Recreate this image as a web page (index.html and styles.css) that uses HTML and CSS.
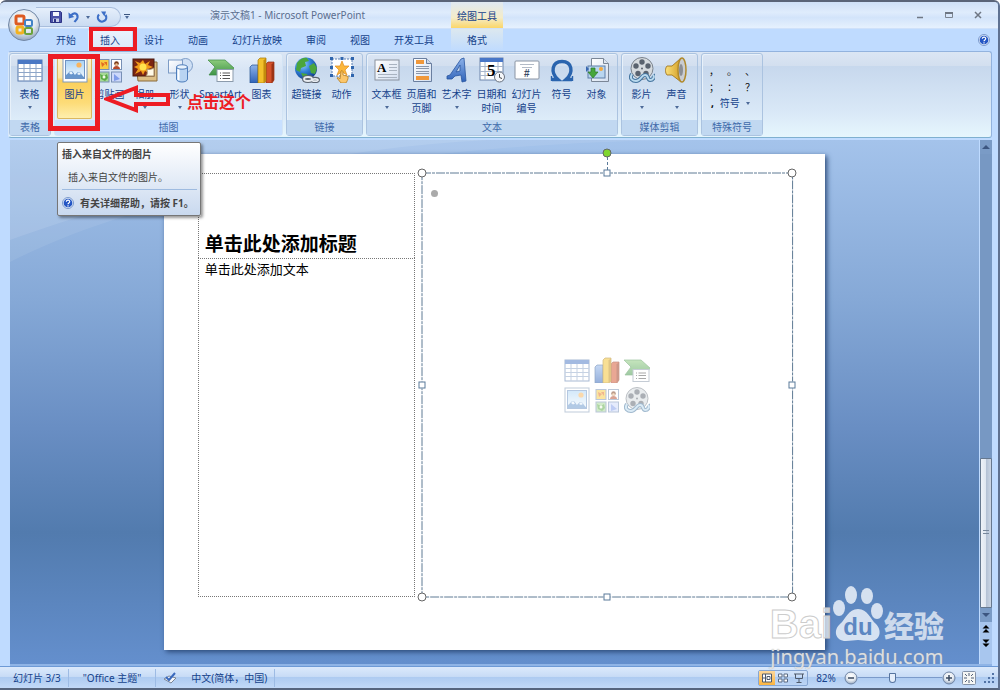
FILE: index.html
```html
<!DOCTYPE html>
<html lang="zh-CN">
  <head>
    <meta charset="UTF-8" />
    <meta name="viewport" content="width=device-width, initial-scale=1.0" />
    <title>演示文稿1 - Microsoft PowerPoint</title>
    <link rel="stylesheet" href="styles.css">
  </head>
  <body>
    <!-- icon library -->
    <svg class="sprite" aria-hidden="true">
      <defs>
        <linearGradient id="g-blue" x1="0" y1="0" x2="0" y2="1">
          <stop offset="0" stop-color="#8db2ea" /><stop offset="1" stop-color="#2e62b8" />
        </linearGradient>
        <linearGradient id="g-green" x1="0" y1="0" x2="0" y2="1">
          <stop offset="0" stop-color="#8ccb7c" /><stop offset="1" stop-color="#3f9548" />
        </linearGradient>
        <linearGradient id="g-sky" x1="0" y1="0" x2="0" y2="1">
          <stop offset="0" stop-color="#a9d3f5" /><stop offset="1" stop-color="#f3f9fe" />
        </linearGradient>
        <linearGradient id="g-page" x1="0" y1="0" x2="1" y2="1">
          <stop offset="0" stop-color="#ffffff" /><stop offset="1" stop-color="#d3dff0" />
        </linearGradient>
        <linearGradient id="g-gold" x1="0" y1="0" x2="1" y2="0">
          <stop offset="0" stop-color="#fbe17c" /><stop offset="1" stop-color="#c98d10" />
        </linearGradient>
        <radialGradient id="g-orb" cx="50%" cy="35%" r="65%">
          <stop offset="0" stop-color="#ffffff" /><stop offset="0.6" stop-color="#e2e8ef" /><stop offset="1" stop-color="#93a5bd" />
        </radialGradient>
        <radialGradient id="g-globe" cx="35%" cy="30%" r="75%">
          <stop offset="0" stop-color="#9cd4ff" /><stop offset="0.5" stop-color="#2f7fd6" /><stop offset="1" stop-color="#123e8c" />
        </radialGradient>
      </defs>
      <symbol id="i-table" viewBox="0 0 26 26">
        <rect x="1" y="3" width="24" height="21" fill="#fff" stroke="#5577ab" />
        <rect x="1" y="3" width="24" height="4" fill="#4a78c4" />
        <path d="M1 11.5h24M1 15.5h24M1 19.5h24M7 7v17M13 7v17M19 7v17" stroke="#8ea6c8" fill="none" />
      </symbol>
      <symbol id="i-picture" viewBox="0 0 26 26">
        <rect x="1" y="1" width="24" height="24" fill="#fff" stroke="#8199b8" />
        <rect x="3.5" y="3.5" width="19" height="18" fill="url(#g-sky)" stroke="#6e93c4" />
        <circle cx="17" cy="8" r="2.6" fill="#f9b45c" />
        <path d="M4 21v-3c2-1 3-4 5-4s3 3 4 4c1-1 2-3 4-3s3 4 5 5v1z" fill="#6796cd" />
        <path d="M7 16l2-2 2 2.500-2 1zM15 17l2-2 2 2-2 1z" fill="#eaf4fc" />
      </symbol>
      <symbol id="i-clip" viewBox="0 0 26 26">
        <g stroke="#7890b5" fill="#fff">
          <rect x="2" y="2.500" width="10" height="10" fill="#f9cb40" /><rect x="14.500" y="2.500" width="10" height="10" />
          <rect x="2" y="15" width="10" height="10" fill="#a6d996" /><rect x="14.500" y="15" width="10" height="10" fill="#ccd8fa" />
        </g>
        <path d="M4 5l4 2-3 3zM7 5h3v4z" fill="#e36b22" />
        <circle cx="19.500" cy="6.500" r="2.300" fill="#7a3a18" /><path d="M16 12c0-4 7-4 7 0z" fill="#b54a2c" /><circle cx="19.500" cy="7.500" r="1.300" fill="#f2c08b" />
        <path d="M3 17l4 2 3-2 1 4-3 3-4-2z" fill="#5baa47" /><circle cx="7" cy="20" r="1.500" fill="#f0fbe8" />
        <path d="M17 17l6 5-6 2z" fill="#7f9bea" />
      </symbol>
      <symbol id="i-album" viewBox="0 0 26 26">
        <path d="M4 5h21v19H6z" fill="#dcbf85" stroke="#8a6b3a" />
        <rect x="1" y="2" width="21" height="17" fill="#7b2513" stroke="#4b1a10" />
        <path d="M11 3l2 4 5-3-2 4 5 2-5 2 3 5-6-3-2 4-2-4-6 3 3-5-4-2 4-2-3-4 5 2z" fill="#f29b1a" />
        <circle cx="11" cy="10" r="3.500" fill="#ffe34d" />
        <path d="M14 19c2-2 1-5 1-7 2 1 5 0 7-1v8z" fill="#fff9e6" stroke="#a58c63" />
      </symbol>
      <symbol id="i-shapes" viewBox="0 0 26 26">
        <circle cx="18.500" cy="8.500" r="7" fill="#cfe0f5" stroke="#7d9cc6" />
        <rect x="1.500" y="3" width="14" height="13" fill="url(#g-page)" stroke="#7d9cc6" />
        <path d="M9.500 10v12c0 4 11 4 11 0V10z" fill="#b9d4f2" stroke="#4e7dbb" />
        <path d="M11.500 12v11" stroke="#fff" stroke-width="2" />
        <ellipse cx="15" cy="10" rx="5.500" ry="2.200" fill="#e9f3fd" stroke="#4e7dbb" />
      </symbol>
      <symbol id="i-smartart" viewBox="0 0 26 26">
        <path d="M0 3h17l9 8-4 7H1l6-8z" fill="url(#g-green)" stroke="#3d8a42" stroke-width=".7" />
        <rect x="9" y="12.500" width="16" height="12" fill="#fff" stroke="#8c9bac" />
        <path d="M12 16h1M12 18.500h1M12 21.500h1M14.500 16H22M14.500 18.500H22M14.500 21.500H22" stroke="#555" fill="none" />
      </symbol>
      <symbol id="i-chart" viewBox="0 0 26 26">
        <path d="M1 10l2-2h6v18H1z" fill="url(#g-blue)" stroke="#23508f" stroke-width=".7" />
        <path d="M17 7l2-2h6v18l-2 3h-6z" fill="#d5522b" stroke="#8f2d12" stroke-width=".7" />
        <path d="M22.500 7.500L25 5v18l-2.500 3z" fill="#9c3315" />
        <path d="M9 3l2-2h6v23l-2 2H9z" fill="#f3c02b" stroke="#a57607" stroke-width=".7" />
        <path d="M14.500 3.500L17 1v23l-2.500 2z" fill="#c38c0d" />
      </symbol>
      <symbol id="i-link" viewBox="0 0 26 26">
        <circle cx="12" cy="11.500" r="11" fill="url(#g-globe)" />
        <path d="M3 6c3-5 8-6 10-5l2 3-4 1 1 4-5 2-1 4-4-2zM15 9l5-3 3 5-2 6-4-1zM7 16l6 1 1 4-4 1z" fill="#4ba63c" />
        <g fill="none" stroke="#5b6470" stroke-width="4"><ellipse cx="14" cy="22" rx="4" ry="2" /><ellipse cx="21" cy="23" rx="3" ry="1.200" /></g>
        <g fill="none" stroke="#e7ebf0" stroke-width="1.800"><ellipse cx="14" cy="22" rx="4" ry="2" /><ellipse cx="21" cy="23" rx="3" ry="1.200" /></g>
      </symbol>
      <symbol id="i-action" viewBox="0 0 26 26">
        <rect x="3" y="2" width="20" height="17" fill="#fff" stroke="#5a7fb3" stroke-dasharray="2 1" />
        <path d="M13 4l2 5h5l-4 4 2 5-5-3-5 3 2-5-4-4h5z" fill="#fcb73c" stroke="#e08b1c" stroke-width=".7" />
        <g fill="#2f65ad"><rect x="1" y="0" width="3" height="3" /><rect x="11.500" y="0" width="3" height="3" /><rect x="22" y="0" width="3" height="3" /><rect x="1" y="9" width="3" height="3" /><rect x="22" y="9" width="3" height="3" /><rect x="1" y="17" width="3" height="3" /><rect x="22" y="17" width="3" height="3" /></g>
        <path d="M12 14c1-1 2 0 2 1v3l4 1c2 0 1 4-1 7h-5l-4-5c1-1 2 0 3 1z" fill="#fbc66b" stroke="#b57c1c" stroke-width=".8" />
      </symbol>
      <symbol id="i-header" viewBox="0 0 26 26">
        <path d="M4.500 1.500h13l5 5v18h-18z" fill="url(#g-page)" stroke="#6a7fa0" />
        <path d="M17.500 1.500v5h5" fill="#cdd9ea" stroke="#6a7fa0" />
        <rect x="7" y="3" width="8" height="4" fill="#f0983a" /><rect x="7" y="19" width="13" height="4" fill="#f0983a" />
        <path d="M7 9.500h13M7 11.500h13M7 14.500h13M7 16.500h13" stroke="#8b97aa" fill="none" />
      </symbol>
      <symbol id="i-wordart" viewBox="0 0 26 26">
        <path fill-rule="evenodd" d="M3 19l3-1L17 2l3-1 2 23-4 1-1-7-6 1-3 3-5 0zM12 15l4-1V8z" fill="url(#g-blue)" stroke="#2855a0" stroke-width=".8" />
      </symbol>
      <symbol id="i-omega" viewBox="0 0 26 26">
        <path d="M3 22.500h6c-8-7-6-18 4-18s12 11 4 18h6" fill="none" stroke="#2a64ae" stroke-width="3.400" />
        <path d="M2.500 24v-5M23.500 24v-5" stroke="#2a64ae" stroke-width="1.400" />
      </symbol>
      <symbol id="i-object" viewBox="0 0 26 26">
        <path d="M7.500 1.500h12l5 5v18h-17z" fill="url(#g-page)" stroke="#7a8696" />
        <path d="M19.500 1.500v5h5" fill="#dde5f0" stroke="#7a8696" />
        <rect x="4" y="9" width="17" height="12" fill="#b9d6f0" stroke="#5f7fa8" />
        <circle cx="17" cy="12" r="2" fill="#f5a93c" /><path d="M2 9v6l3-3z" fill="#3a68b0" />
        <path d="M7 11h4v4h3l-5 6-5-6h3z" fill="#46a63c" stroke="#2d7a28" stroke-width=".7" />
      </symbol>
      <symbol id="i-movie" viewBox="0 0 26 26">
        <circle cx="13" cy="11.500" r="11" fill="#d5dade" stroke="#7a828c" />
        <g fill="#59626e"><circle cx="13" cy="5" r="2.700" /><circle cx="19" cy="9" r="2.700" /><circle cx="17" cy="16.500" r="2.700" /><circle cx="9" cy="16.500" r="2.700" /><circle cx="7" cy="9" r="2.700" /><circle cx="13" cy="11.500" r="1" /></g>
        <path d="M3 17c-3 5 1 7 4 7 5 0 5-6 9-6s2 5 5 5 5-3 3-5" fill="none" stroke="#45759f" stroke-width="4" />
        <path d="M3 17c-3 5 1 7 4 7 5 0 5-6 9-6s2 5 5 5 5-3 3-5" fill="none" stroke="#b9d9ee" stroke-width="2" />
      </symbol>
      <symbol id="i-sound" viewBox="0 0 26 26">
        <path d="M3 9h5l9-8c5 6 5 18 0 24l-9-7H3c-2-2-2-7 0-9z" fill="url(#g-gold)" stroke="#9a6b10" stroke-width=".8" />
        <ellipse cx="18" cy="13" rx="4" ry="12" fill="#c9ccd1" stroke="#b08a2c" stroke-width="1.500" />
        <ellipse cx="17" cy="13" rx="2" ry="6" fill="#8b8e94" />
      </symbol>
      <symbol id="i-help" viewBox="0 0 12 12">
        <circle cx="6" cy="6" r="5.500" fill="#dce8f8" stroke="#7b99cc" />
        <circle cx="6" cy="6" r="4.300" fill="#2355c4" />
        <path d="M4.300 4.700c.2-2.200 3.600-2 3.400.1C7.600 6 6 5.900 6 7.200M6 8.200v1.200" fill="none" stroke="#fff" stroke-width="1.200" />
      </symbol>
    </svg>

    <div class="window">
      <header class="titlebar">
        <div class="quick-access">
          <button class="qa-btn" aria-label="保存"><svg viewBox="0 0 12 12"><path d="M.5.5h10l1 1v10H.5z" fill="#4a51a8" stroke="#2c3384" /><path d="M3 1h6v4H3z" fill="#f4f6fc" /><path d="M3 7.500h6V11H3z" fill="#c8cde8" /><path d="M4 8h2v3H4z" fill="#2c3384" /></svg></button>
          <button class="qa-btn" aria-label="撤消"><svg viewBox="0 0 12 12"><path d="M3 4.500c3-4 7-2 6.500 2-.4 2-2 3-3 4.500" fill="none" stroke="#3d6fc7" stroke-width="2.200" /><path d="M.5 1.500l.3 6 5.500-1.500z" fill="#3d6fc7" /></svg></button>
          <i class="caret"></i>
          <button class="qa-btn" aria-label="恢复"><svg viewBox="0 0 12 12"><path d="M3 3.500a4.200 4.200 0 1 0 6.500.5" fill="none" stroke="#3d6fc7" stroke-width="2.200" /><path d="M5 0.500h5L8.500 5.500z" fill="#3d6fc7" /></svg></button>
        </div>
        <button class="qa-more" aria-label="自定义快速访问工具栏"><i class="caret"></i></button>
        <h1 class="window-title">演示文稿1 - Microsoft PowerPoint</h1>
        <span class="context-title">绘图工具</span>
        <div class="window-buttons">
          <button aria-label="最小化"><svg viewBox="0 0 8 8"><path d="M1 6.500h6" stroke="#6f7784" stroke-width="1.500" /></svg></button>
          <button aria-label="最大化"><svg viewBox="0 0 8 8"><path d="M.5 1.500h7v5h-7z" fill="none" stroke="#7d8591" /><path d="M0 2h8" stroke="#6f7784" stroke-width="2" /></svg></button>
          <button aria-label="关闭"><svg viewBox="0 0 8 8"><path d="M1 1l6 6M7 1L1 7" stroke="#6f7784" stroke-width="1.500" /></svg></button>
        </div>
        <button class="office-button" aria-label="Office 按钮">
          <svg viewBox="0 0 32 32">
            <circle cx="16" cy="16" r="15.500" fill="url(#g-orb)" stroke="#7187a6" />
            <g fill="none" stroke-width="3">
              <rect x="8" y="7" width="8" height="8" rx="1.500" stroke="#dd5a22" /><rect x="17" y="11" width="7" height="6" rx="1.500" stroke="#4283c6" stroke-width="2" />
              <rect x="9" y="18" width="6" height="6" rx="1.500" stroke="#f2b221" /><rect x="17" y="19" width="7" height="6" rx="1.500" stroke="#6ca33b" stroke-width="2" />
            </g>
          </svg>
        </button>
      </header>

      <nav class="tabs">
        <button class="tab">开始</button>
        <button class="tab active">插入</button>
        <button class="tab">设计</button>
        <button class="tab">动画</button>
        <button class="tab">幻灯片放映</button>
        <button class="tab">审阅</button>
        <button class="tab">视图</button>
        <button class="tab">开发工具</button>
        <button class="tab context">格式</button>
        <button class="help-btn" aria-label="帮助"><svg><use href="#i-help" /></svg></button>
      </nav>

      <div class="ribbon">
        <section class="group">
          <div class="tools">
            <button class="tool"><svg><use href="#i-table" /></svg><span>表格</span><i class="caret"></i></button>
          </div>
          <h2>表格</h2>
        </section>
        <section class="group hot">
          <div class="tools">
            <button class="tool selected"><svg><use href="#i-picture" /></svg><span>图片</span></button>
            <button class="tool"><svg><use href="#i-clip" /></svg><span>剪贴画</span></button>
            <button class="tool"><svg><use href="#i-album" /></svg><span>相册</span><i class="caret"></i></button>
            <button class="tool"><svg><use href="#i-shapes" /></svg><span>形状</span><i class="caret"></i></button>
            <button class="tool wide"><svg><use href="#i-smartart" /></svg><span>SmartArt</span></button>
            <button class="tool"><svg><use href="#i-chart" /></svg><span>图表</span></button>
          </div>
          <h2>插图</h2>
        </section>
        <section class="group">
          <div class="tools">
            <button class="tool"><svg><use href="#i-link" /></svg><span>超链接</span></button>
            <button class="tool"><svg><use href="#i-action" /></svg><span>动作</span></button>
          </div>
          <h2>链接</h2>
        </section>
        <section class="group">
          <div class="tools">
            <button class="tool">
              <svg viewBox="0 0 26 26">
                <rect x="1" y="3" width="24" height="20" fill="url(#g-page)" stroke="#8a929e" />
                <text x="3" y="15" class="ic-letter">A</text>
                <path d="M15 7.500h8M15 10.500h8M15 13.500h8M4 17.500h19M4 20.500h19" stroke="#a9b3c0" fill="none" />
              </svg>
              <span>文本框</span><i class="caret"></i>
            </button>
            <button class="tool"><svg><use href="#i-header" /></svg><span>页眉和<br />页脚</span></button>
            <button class="tool"><svg><use href="#i-wordart" /></svg><span>艺术字</span><i class="caret"></i></button>
            <button class="tool">
              <svg viewBox="0 0 26 26">
                <rect x="1" y="1" width="23" height="22" fill="#fff" stroke="#6f86ab" />
                <rect x="1" y="1" width="23" height="4" fill="#4876c7" />
                <path d="M1 9.500h23M1 14.500h23M1 18.500h23M6 5v18M19 5v18" stroke="#a8b6cc" fill="none" />
                <text x="8" y="19" class="ic-num">5</text>
                <circle cx="20.500" cy="20" r="5" fill="#f5f7fa" stroke="#69717e" /><path d="M20.500 17v3.500l2.500 1" stroke="#444" fill="none" />
              </svg>
              <span>日期和<br />时间</span>
            </button>
            <button class="tool">
              <svg viewBox="0 0 26 26">
                <rect x="1" y="4" width="24" height="18" rx="1" fill="#fff" stroke="#8a94a3" />
                <path d="M6 7.500h14M8 10.500h10" stroke="#b3bbc7" fill="none" />
                <text x="10" y="20" class="ic-hash">#</text>
              </svg>
              <span>幻灯片<br />编号</span>
            </button>
            <button class="tool"><svg><use href="#i-omega" /></svg><span>符号</span></button>
            <button class="tool"><svg><use href="#i-object" /></svg><span>对象</span></button>
          </div>
          <h2>文本</h2>
        </section>
        <section class="group">
          <div class="tools">
            <button class="tool"><svg><use href="#i-movie" /></svg><span>影片</span><i class="caret"></i></button>
            <button class="tool"><svg><use href="#i-sound" /></svg><span>声音</span><i class="caret"></i></button>
          </div>
          <h2>媒体剪辑</h2>
        </section>
        <section class="group">
          <div class="symbols">
            <button>，</button><button>。</button><button>、</button>
            <button>；</button><button>：</button><button>？</button>
            <button class="more"><b>,</b>符号<i class="caret"></i></button>
          </div>
          <h2>特殊符号</h2>
        </section>
      </div>

      <div class="workspace">
        <main class="canvas">
          <svg class="swoosh" viewBox="0 0 970 130" preserveAspectRatio="none" aria-hidden="true">
            <path d="M0 0H480C300 8 110 60 0 100z" fill="#fff" opacity=".1" />
            <path d="M0 0H700C400 0 140 50 0 122z" fill="#fff" opacity=".08" />
          </svg>
          <div class="slide">
            <div class="text-column">
              <div class="holder title-holder">单击此处添加标题</div>
              <div class="holder body-holder">单击此处添加文本</div>
            </div>
            <div class="content-holder">
              <svg class="outline" aria-hidden="true"><rect width="100%" height="100%" fill="none" stroke="#5f7a94" stroke-dasharray="9 1 3 1" /></svg>
              <span class="bullet"></span>
              <div class="content-icons">
                <button aria-label="插入表格"><svg><use href="#i-table" /></svg></button>
                <button aria-label="插入图表"><svg><use href="#i-chart" /></svg></button>
                <button aria-label="插入 SmartArt 图形"><svg><use href="#i-smartart" /></svg></button>
                <button aria-label="插入来自文件的图片"><svg><use href="#i-picture" /></svg></button>
                <button aria-label="剪贴画"><svg><use href="#i-clip" /></svg></button>
                <button aria-label="插入媒体剪辑"><svg><use href="#i-movie" /></svg></button>
              </div>
              <i class="handle round nw"></i><i class="handle n"></i><i class="handle round ne"></i>
              <i class="handle w"></i><i class="handle e"></i>
              <i class="handle round sw"></i><i class="handle s"></i><i class="handle round se"></i>
              <i class="rotate-line"></i><i class="handle round rotate"></i>
            </div>
          </div>
        </main>
        <div class="scrollbar">
          <button class="sb-btn" aria-label="向上"><i class="caret up"></i></button>
          <div class="sb-track"><div class="sb-thumb"></div></div>
          <button class="sb-btn" aria-label="向下"><i class="caret"></i></button>
          <button class="sb-page" aria-label="上一张幻灯片"><svg viewBox="0 0 8 8"><path d="M4 0l3.500 3.500h-7zM4 4l3.500 3.500h-7z" /></svg></button>
          <button class="sb-page" aria-label="下一张幻灯片"><svg viewBox="0 0 8 8"><path d="M4 8L.5 4.500h7zM4 4L.5.5h7z" /></svg></button>
        </div>
      </div>

      <footer class="statusbar">
        <span class="status-item">幻灯片 3/3</span>
        <span class="status-item">"Office 主题"</span>
        <span class="status-item spell">
          <svg viewBox="0 0 14 12"><path d="M1 7l5-3 7 2-5 5z" fill="#f4f6fa" stroke="#7a8596" /><path d="M3 5l3 3 6-7" fill="none" stroke="#3969bd" stroke-width="2" /></svg>
          中文(简体，中国)
        </span>
        <div class="views">
          <button class="on" aria-label="普通视图"><svg viewBox="0 0 10 10"><path d="M.5 1h9v8h-9zM3.500 1v8M3.500 5h-3M5 3.500h3v3H5z" fill="#fff" stroke="#4f5a6b" /></svg></button>
          <button aria-label="幻灯片浏览"><svg viewBox="0 0 10 10"><path d="M.5 1h3.500v3H.5zM6 1h3.500v3H6zM.5 6h3.500v3H.5zM6 6h3.500v3H6z" fill="#fff" stroke="#5a6a82" /></svg></button>
          <button aria-label="幻灯片放映"><svg viewBox="0 0 10 10"><path d="M0 1h10M1.500 1v4.500h7V1M5 5.500V9M2.500 9.500h5" fill="none" stroke="#4f5a6b" /></svg></button>
        </div>
        <output class="zoom-value" for="zoom">82%</output>
        <button class="zoom-btn" aria-label="缩小"><svg viewBox="0 0 14 14"><circle cx="7" cy="7" r="6" fill="url(#g-orb)" stroke="#6e84a5" /><path d="M4 7h6" stroke="#38485f" stroke-width="1.500" /></svg></button>
        <input class="zoom-slider" type="range" id="zoom" aria-label="显示比例" min="0" max="100" value="40" />
        <button class="zoom-btn" aria-label="放大"><svg viewBox="0 0 14 14"><circle cx="7" cy="7" r="6" fill="url(#g-orb)" stroke="#6e84a5" /><path d="M4 7h6M7 4v6" stroke="#38485f" stroke-width="1.500" /></svg></button>
        <button class="zoom-btn fit" aria-label="适应窗口"><svg viewBox="0 0 14 14"><rect x=".5" y=".5" width="13" height="13" rx="1" fill="#f5f6f4" stroke="#8391a6" /><path d="M3 3l2 2M11 3L9 5M11 11L9 9M3 11l2-2M7 2v3M7 9v3M2 7h3M9 7h3" fill="none" stroke="#526078" /></svg></button>
        <svg class="grip" viewBox="0 0 10 10" aria-hidden="true"><path d="M8 0h2v2H8zM4 4h2v2H4zM8 4h2v2H8zM0 8h2v2H0zM4 8h2v2H4zM8 8h2v2H8z" fill="#5273a6" /></svg>
      </footer>

      <div class="tooltip" role="tooltip">
        <strong>插入来自文件的图片</strong>
        <p>插入来自文件的图片。</p>
        <div class="tooltip-help"><svg><use href="#i-help" /></svg>有关详细帮助，请按 F1。</div>
      </div>

      <!-- tutorial marks -->
      <div class="mark mark-tab"></div>
      <div class="mark mark-tool"></div>
      <div class="callout">
        <svg viewBox="0 0 66 30"><path d="M3 15L32 4v7h32v9H32v6z" fill="none" stroke="#ed1c24" stroke-width="4" /></svg>
        <span>点击这个</span>
      </div>

      <div class="watermark">
        <div class="logo">
          <span class="bai">Bai</span>
          <span class="paw">
            <svg viewBox="0 0 52 56" aria-hidden="true"><path d="M26 23c10 0 12 10 18 15 6 6 5 17-6 17-5 0-8-1-12-1s-7 1-12 1C3 55 1 44 8 38c6-5 8-15 18-15z" /><ellipse cx="7" cy="22" rx="6" ry="8" /><ellipse cx="19" cy="9" rx="6" ry="9" /><ellipse cx="35" cy="10" rx="6" ry="8" /><ellipse cx="45" cy="25" rx="6" ry="8" /></svg>
            <b>du</b>
          </span>
          <span class="jingyan">经验</span>
        </div>
        <div class="url">jingyan.baidu.com</div>
      </div>
    </div>
  </body>
</html>
```
FILE: styles.css
```css
* {
  box-sizing: border-box;
}

body {
  margin: 0;
  font-family: 'Noto Sans', 'Noto Sans CJK SC', sans-serif;
  font-size: 10px;
  line-height: 14px;
  color: #15428b;
}

button {
  border: none;
  background: none;
  padding: 0;
  font: inherit;
  color: inherit;
  cursor: pointer;
}

svg {
  display: block;
}

h1,
h2,
p {
  margin: 0;
  font-size: 10px;
  font-weight: normal;
}

.sprite {
  position: absolute;
  width: 0;
  height: 0;
}

.ic-letter {
  font: bold 13px 'Liberation Serif', serif;
}

.ic-num {
  font: bold 17px 'Liberation Serif', serif;
}

.ic-hash {
  font: bold 10px 'Liberation Sans', sans-serif;
  fill: #3a4a66;
}

.window {
  position: relative;
  display: flex;
  flex-direction: column;
  height: 100vh;
  min-height: 500px;
  overflow: hidden;
  background: #bfdbff;
  border-top: 2px solid #5a6478;
  border-right: 2px solid #5f7292;
  border-bottom: 2px solid #56657e;
  border-radius: 6px 6px 0 0;
}

.caret {
  display: block;
  border: 2px solid transparent;
  border-top: 3px solid #4d6a98;
  border-bottom: 0;
}

.caret.up {
  border-top: 0;
  border-bottom: 3px solid #3c5680;
}

/* title bar */
.titlebar {
  display: flex;
  align-items: center;
  flex: none;
  height: 26px;
  padding: 0 16px 0 36px;
  background: linear-gradient(#cfe0f7, #dfecfc 40%, #d3e4fa 60%, #e6f1fe);
}

.quick-access {
  display: flex;
  align-items: center;
  gap: 6px;
  height: 20px;
  margin-top: 4px;
  padding: 0 12px 0 14px;
  border: 1px solid #a9bedd;
  border-left: 0;
  border-radius: 0 10px 10px 0;
  background: linear-gradient(#e6effb, #cadbf2);
}

.qa-btn svg {
  width: 12px;
  height: 12px;
}

.qa-more {
  border-top: 1px solid #3c5680;
  padding: 1px;
  margin: 4px 0 0 3px;
}

.window-title {
  margin-left: 80px;
  color: #5b6e8f;
}

.context-title {
  align-self: stretch;
  width: 52px;
  margin-left: auto;
  padding-top: 7px;
  text-align: center;
  background: linear-gradient(#e0e9f2, #f4ecc9 60%, #fbd668);
}

.window-buttons {
  display: flex;
  gap: 21px;
  width: 479px;
  justify-content: flex-end;
}

.window-buttons svg {
  width: 8px;
  height: 8px;
}

.office-button {
  position: absolute;
  left: 8px;
  top: 7px;
}

.office-button svg {
  width: 32px;
  height: 32px;
}

/* tabs */
.tabs {
  display: flex;
  flex: none;
  height: 23px;
  padding: 0 8px 0 44px;
  border-top: 1px solid #cfe1fa;
}

.tab {
  padding: 0 12px;
}

.tab.active {
  border-radius: 3px 3px 0 0;
  background: linear-gradient(#eaf3fe, #dbe8f8);
}

.tab.context {
  margin-left: 5px;
  padding: 0 16px;
  background: linear-gradient(#dce8ef, #bfdbff);
}

.help-btn {
  margin-left: auto;
}

.help-btn svg {
  width: 12px;
  height: 12px;
}

/* ribbon */
.ribbon {
  display: flex;
  gap: 3px;
  flex: none;
  height: 87px;
  margin: 0 6px 0 8px;
  padding: 1px 1px 1px 0;
  border: 1px solid #93b3de;
  border-left-color: #d8e8fa;
  border-bottom-color: #7fb0d0;
  border-radius: 3px;
  background: linear-gradient(#dbe6f4, #d3dfef 16%, #c7d8ed 17%, #d9e8f7 70%, #e6f6fd);
}

.group {
  display: flex;
  flex-direction: column;
  border: 1px solid #abc3e0;
  border-radius: 3px;
  box-shadow: inset 1px 1px #e8f1fa;
}

.group.hot {
  border-color: #d3e4f5;
  background: linear-gradient(#e6eff9, #d8e5f5 20%, #e3effb);
}

.group h2 {
  height: 15px;
  text-align: center;
  color: #3e6aaa;
  background: #c1d8f1;
}

.group.hot h2 {
  background: #c8e0ff;
}

.tools {
  display: flex;
  flex: 1;
  padding: 1px 3px 1px 2px;
}

.tool {
  display: flex;
  flex-direction: column;
  align-items: center;
  width: 35px;
  padding-top: 2px;
  line-height: 14px;
  white-space: nowrap;
  border-radius: 2px;
}

.tool svg {
  width: 26px;
  height: 26px;
  margin-bottom: 4px;
}

.tool .caret {
  margin-top: 5px;
}

.tool.wide {
  width: 47px;
}

.tool.selected {
  background: linear-gradient(#fdf3d2, #fbe6a4 35%, #fbcf5a 40%, #fddc78 75%, #fef0b0);
  box-shadow: inset 0 0 0 1px #dcb85e;
}

.symbols {
  display: grid;
  grid-template-columns: repeat(3, 18px);
  grid-template-rows: repeat(3, 16px);
  align-content: center;
  flex: 1;
  padding: 0 3px;
  color: #111;
}

.symbols .more {
  display: flex;
  grid-column: 1 / -1;
  align-items: center;
  gap: 6px;
  padding-left: 6px;
  color: #15428b;
}

.symbols b {
  color: #000;
}

/* workspace */
.workspace {
  display: flex;
  flex: 1;
  min-height: 0;
  margin: 2px 6px 0 10px;
  border-bottom: 2px solid #8fb4e6;
}

.canvas {
  position: relative;
  display: flex;
  justify-content: center;
  flex: 1;
  min-width: 0;
  padding: 14px 0;
  background: linear-gradient(#a4c3eb, #86a9d7 30%, #698ec3 55%, #527bae 75%, #648fcd);
}

.swoosh {
  position: absolute;
  left: 0;
  top: 0;
  width: 100%;
  height: 130px;
}

.slide {
  position: relative;
  display: grid;
  grid-template-columns: 217fr 371fr;
  gap: 7px;
  height: 100%;
  aspect-ratio: 4 / 3;
  padding: 19px 33px 53px 34px;
  background: #fff;
  box-shadow: 2px 2px 5px #2c4a78;
}

.text-column {
  display: grid;
  grid-template-rows: 1fr 4fr;
  color: #000;
}

.holder {
  padding: 0 6px;
  border: 1px dotted #777;
}

.title-holder {
  display: flex;
  align-items: flex-end;
  border-bottom: 0;
  font-size: 19px;
  font-weight: bold;
  line-height: 28px;
}

.body-holder {
  font-size: 13px;
  line-height: 20px;
}

.content-holder {
  position: relative;
  display: flex;
  align-items: center;
  justify-content: center;
}

.outline {
  position: absolute;
  width: 100%;
  height: 100%;
  overflow: visible;
}

.bullet {
  position: absolute;
  left: 9px;
  top: 17px;
  width: 7px;
  height: 7px;
  border-radius: 50%;
  background: #aaa;
}

.content-icons {
  display: grid;
  grid-template-columns: repeat(3, 26px);
  gap: 4px;
  opacity: 0.5;
}

.content-icons svg {
  width: 26px;
  height: 26px;
}

.handle {
  position: absolute;
  width: 7px;
  height: 7px;
  border: 1px solid #5a7a9a;
  background: #fff;
  transform: translate(-50%, -50%);
}

.handle.round {
  width: 9px;
  height: 9px;
  border-color: #666;
  border-radius: 50%;
}

.nw, .n, .ne { top: 0; }
.w, .e { top: 50%; }
.sw, .s, .se { top: 100%; }
.nw, .w, .sw { left: 0; }
.n, .s { left: 50%; }
.ne, .e, .se { left: 100%; }

.handle.rotate {
  left: 50%;
  top: -20px;
  background: #7fd62f;
}

.rotate-line {
  position: absolute;
  left: 50%;
  top: -16px;
  height: 13px;
  border-left: 1px dashed #5a7a9a;
}

/* vertical scrollbar */
.scrollbar {
  display: flex;
  flex-direction: column;
  width: 12px;
  margin-left: 1px;
  padding-bottom: 14px;
  background: #a8c6ee;
}

.sb-btn {
  display: flex;
  align-items: center;
  justify-content: center;
  height: 14px;
  background: #7a9bc6;
}

.sb-btn .caret {
  border-width: 4px;
  border-top-color: #3c5680;
  border-bottom-width: 0;
}

.sb-btn .caret.up {
  border-top-width: 0;
  border-bottom-width: 4px;
}

.sb-track {
  display: flex;
  flex: 1;
  align-items: flex-end;
  background: #7798c3;
}

.sb-thumb {
  width: 100%;
  height: 33%;
  border: 1px solid #66788f;
  border-radius: 1px;
  background:
    repeating-linear-gradient(#77879c 0 1px, transparent 1px 3px) center / 6px 6px no-repeat,
    linear-gradient(90deg, #eef2f8, #dfe6f0 50%, #b5c2d5 55%, #cbd6e5);
}

.sb-page {
  display: flex;
  align-items: center;
  justify-content: center;
  height: 14px;
}

.sb-page svg {
  width: 8px;
  height: 8px;
}

/* status bar */
.statusbar {
  display: flex;
  align-items: center;
  flex: none;
  height: 22px;
  padding: 0 4px 0 3px;
  background: linear-gradient(#dbe9fb, #c8dcf6 45%, #aecbf1 50%, #c2d9f7);
  border-top: 1px solid #6d9ad6;
}

.status-item {
  display: flex;
  align-items: center;
  height: 18px;
  padding: 0 7px 0 10px;
  border-right: 1px solid #9dbbe4;
  white-space: nowrap;
}

.status-item + .status-item {
  padding: 0 14px;
}

.status-item.spell {
  gap: 14px;
}

.status-item + .spell {
  padding: 0 7px;
}

.spell svg {
  width: 14px;
  height: 12px;
}

.views {
  display: flex;
  margin-left: auto;
  border: 1px solid #86a6d3;
  border-radius: 2px;
}

.views button {
  padding: 2px 3px;
}

.views svg {
  width: 10px;
  height: 10px;
}

.views .on {
  background: linear-gradient(#fdd79b, #fbb43f);
}

.zoom-value {
  width: 36px;
  text-align: center;
}

.zoom-btn svg {
  width: 14px;
  height: 14px;
}

.zoom-btn.fit {
  margin: 0 8px 0 6px;
}

.zoom-slider {
  width: 84px;
  height: 14px;
  margin: 0;
  appearance: none;
  background: linear-gradient(#7b9aca, #7b9aca) center / 100% 1px no-repeat;
}

.zoom-slider::-webkit-slider-thumb {
  appearance: none;
  width: 7px;
  height: 10px;
  border: 1px solid #56749f;
  border-radius: 1px 1px 4px 4px;
  background: #e5eefb;
}

.grip {
  width: 10px;
  height: 10px;
}

/* tooltip */
.tooltip {
  position: absolute;
  left: 57px;
  top: 140px;
  width: 144px;
  padding: 4px 3px 5px 4px;
  border: 1px solid #767676;
  border-radius: 2px;
  background: linear-gradient(#fff, #c9d9ef);
  box-shadow: 2px 2px 3px rgba(0, 0, 0, 0.4);
  color: #444;
}

.tooltip p {
  padding: 9px 6px 5px;
  border-bottom: 1px solid #9ebbe0;
}

.tooltip-help {
  display: flex;
  align-items: center;
  gap: 6px;
  padding-top: 6px;
  font-weight: bold;
  white-space: nowrap;
}

.tooltip-help svg {
  width: 12px;
  height: 12px;
}

/* tutorial marks */
.mark {
  position: absolute;
  border: 4px solid #ed1c24;
}

.mark-tab {
  left: 89px;
  top: 25px;
  width: 48px;
  height: 24px;
}

.mark-tool {
  left: 48px;
  top: 52px;
  width: 52px;
  height: 77px;
  border-width: 5px;
}

.callout {
  position: absolute;
  left: 104px;
  top: 82px;
  display: flex;
  align-items: flex-end;
  gap: 17px;
  color: #ed1c24;
  font-size: 16px;
  line-height: 24px;
  font-weight: bold;
}

.callout svg {
  width: 66px;
  height: 30px;
}

/* watermark */
.watermark {
  position: absolute;
  right: 54px;
  bottom: 16px;
  color: rgba(255, 255, 255, 0.7);
  pointer-events: none;
}

.logo {
  display: flex;
  align-items: flex-end;
}

.bai {
  font: bold 40px/36px 'Liberation Sans', sans-serif;
  -webkit-text-stroke: 1px #ccc;
}

.paw {
  position: relative;
}

.paw svg {
  width: 52px;
  height: 56px;
  fill: rgba(235, 241, 249, 0.85);
}

.paw b {
  position: absolute;
  left: 0;
  right: 0;
  bottom: 3px;
  text-align: center;
  color: #5d87c2;
  font: bold 24px/24px 'Liberation Sans', sans-serif;
}

.jingyan {
  font-size: 30px;
  line-height: 32px;
  font-weight: 900;
}

.url {
  font-size: 20px;
  line-height: 30px;
  text-align: center;
  text-shadow: 0 0 1px #999;
}
```
